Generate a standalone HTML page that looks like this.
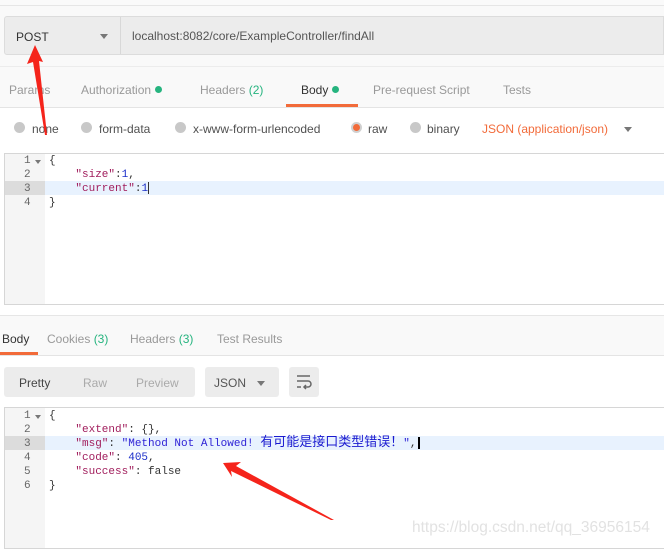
<!DOCTYPE html>
<html><head><meta charset="utf-8"><style>
*{margin:0;padding:0;box-sizing:border-box}
body{width:664px;height:547px;overflow:hidden;background:#fff;font-family:"Liberation Sans","Noto Sans CJK SC",sans-serif;position:relative;color:#505050}
.a{position:absolute;white-space:nowrap}
.mono{font-family:"Liberation Mono","Noto Sans CJK SC",monospace;font-size:11px}
.g{color:#999}
.grn{color:#26b47f}
.dot{display:inline-block;width:7px;height:7px;border-radius:50%;background:#26b47f;margin-left:4px;vertical-align:1px}
.rad{position:absolute;width:11px;height:11px;border-radius:50%;background:#c8c8c8}
.s{color:#a11d5c}.n{color:#1c2fc9}.str{color:#2f23d6}
.ln{position:absolute;left:49px;height:14px;line-height:14px;color:#333}
</style></head><body>
<div class="a" style="left:0;top:0;width:664px;height:6px;border-bottom:1px solid #e6e6e6;background:#fafafa"></div>
<div class="a" style="left:0;top:6px;width:664px;height:102px;background:#f9f9f9"></div>
<div class="a" style="left:4px;top:16px;width:660px;height:39px;background:#ececec;border:1px solid #dcdcdc;border-radius:3px 0 0 3px"></div>
<div class="a" style="left:120px;top:17px;width:1px;height:37px;background:#d8d8d8"></div>
<div class="a" style="left:16px;top:30px;font-size:12px;color:#333">POST</div>
<div class="a" style="left:100px;top:34px;width:0;height:0;border-left:4px solid transparent;border-right:4px solid transparent;border-top:5px solid #777"></div>
<div class="a" style="left:132px;top:29px;font-size:12px;color:#555">localhost:8082/core/ExampleController/findAll</div>
<div class="a" style="left:0;top:66px;width:664px;height:1px;background:#ececec"></div>
<div class="a g" style="left:9px;top:83px;font-size:12px">Params</div>
<div class="a g" style="left:81px;top:83px;font-size:12px">Authorization<span class="dot"></span></div>
<div class="a g" style="left:200px;top:83px;font-size:12px">Headers <span class="grn">(2)</span></div>
<div class="a" style="left:301px;top:83px;font-size:12px;color:#333">Body<span class="dot"></span></div>
<div class="a g" style="left:373px;top:83px;font-size:12px">Pre-request Script</div>
<div class="a g" style="left:503px;top:83px;font-size:12px">Tests</div>
<div class="a" style="left:286px;top:104px;width:72px;height:3px;background:#f26b3a"></div>
<div class="a" style="left:0;top:107px;width:664px;height:1px;background:#e4e4e4"></div>
<div class="rad" style="left:14px;top:122px"></div><div class="a" style="left:32px;top:122px;font-size:12px">none</div>
<div class="rad" style="left:81px;top:122px"></div><div class="a" style="left:99px;top:122px;font-size:12px">form-data</div>
<div class="rad" style="left:175px;top:122px"></div><div class="a" style="left:193px;top:122px;font-size:12px">x-www-form-urlencoded</div>
<div class="rad" style="left:351px;top:122px;background:#f26b3a;border:2px solid #d0d0d0"></div><div class="a" style="left:368px;top:122px;font-size:12px">raw</div>
<div class="rad" style="left:410px;top:122px"></div><div class="a" style="left:427px;top:122px;font-size:12px">binary</div>
<div class="a" style="left:482px;top:122px;font-size:12px;color:#f26b3a">JSON (application/json)</div>
<div class="a" style="left:624px;top:127px;border-left:4px solid transparent;border-right:4px solid transparent;border-top:5px solid #777"></div>
<!-- editor 1 -->
<div class="a" style="left:4px;top:153px;width:662px;height:152px;border:1px solid #d6d6d6;background:#fff"></div>
<div class="a" style="left:5px;top:154px;width:40px;height:150px;background:#f5f5f5"></div>
<div class="a" style="left:45px;top:181px;width:619px;height:14px;background:#e8f2fe"></div>
<div class="a" style="left:5px;top:181px;width:40px;height:14px;background:#dcdcdc"></div>
<div class="a mono" style="left:24px;top:154px;line-height:14px;color:#666">1<br>2<br>3<br>4</div>
<div class="a" style="left:35px;top:160px;border-left:3px solid transparent;border-right:3px solid transparent;border-top:4px solid #777"></div>
<div class="a mono" style="left:49px;top:154px;line-height:14px;color:#333">{<br>&nbsp;&nbsp;&nbsp;&nbsp;<span class="s">"size"</span>:<span class="n">1</span>,<br>&nbsp;&nbsp;&nbsp;&nbsp;<span class="s">"current"</span>:<span class="n">1</span><br>}</div>
<div class="a" style="left:148px;top:182px;width:1px;height:12px;background:#333"></div>
<!-- response -->
<div class="a" style="left:0;top:315px;width:664px;height:41px;background:#f9f9f9;border-top:1px solid #e6e6e6"></div>
<div class="a" style="left:2px;top:332px;font-size:12px;color:#333">Body</div>
<div class="a g" style="left:47px;top:332px;font-size:12px">Cookies <span class="grn">(3)</span></div>
<div class="a g" style="left:130px;top:332px;font-size:12px">Headers <span class="grn">(3)</span></div>
<div class="a g" style="left:217px;top:332px;font-size:12px">Test Results</div>
<div class="a" style="left:0;top:352px;width:38px;height:3px;background:#f26b3a"></div>
<div class="a" style="left:0;top:355px;width:664px;height:1px;background:#e4e4e4"></div>
<div class="a" style="left:4px;top:367px;width:191px;height:30px;background:#ececec;border-radius:3px"></div>
<div class="a" style="left:19px;top:376px;font-size:12px;color:#444">Pretty</div>
<div class="a g" style="left:83px;top:376px;font-size:12px;color:#aaa">Raw</div>
<div class="a g" style="left:136px;top:376px;font-size:12px;color:#aaa">Preview</div>
<div class="a" style="left:205px;top:367px;width:74px;height:30px;background:#ececec;border-radius:3px"></div>
<div class="a" style="left:214px;top:376px;font-size:12px;color:#555">JSON</div>
<div class="a" style="left:257px;top:381px;border-left:4px solid transparent;border-right:4px solid transparent;border-top:5px solid #777"></div>
<div class="a" style="left:289px;top:367px;width:30px;height:30px;background:#ececec;border-radius:3px"></div>
<svg class="a" style="left:289px;top:367px" width="30" height="30"><path d="M8 9h13M8 14h11a3 3 0 0 1 0 6h-4M17 18l-2 2 2 2M8 20h4" fill="none" stroke="#666" stroke-width="1.5"/></svg>
<div class="a" style="left:4px;top:407px;width:662px;height:142px;border:1px solid #d6d6d6;background:#fff"></div>
<div class="a" style="left:5px;top:408px;width:40px;height:140px;background:#f5f5f5"></div>
<div class="a" style="left:45px;top:436px;width:619px;height:14px;background:#e8f2fe"></div>
<div class="a" style="left:5px;top:436px;width:40px;height:14px;background:#dcdcdc"></div>
<div class="a mono" style="left:24px;top:409px;line-height:14px;color:#666">1<br>2<br>3<br>4<br>5<br>6</div>
<div class="a" style="left:35px;top:415px;border-left:3px solid transparent;border-right:3px solid transparent;border-top:4px solid #777"></div>
<div class="a mono ln" style="top:409px">{</div>
<div class="a mono ln" style="top:423px">&nbsp;&nbsp;&nbsp;&nbsp;<span class="s">"extend"</span>: {},</div>
<div class="a mono ln" style="top:437px;font-family:'Liberation Mono',monospace">&nbsp;&nbsp;&nbsp;&nbsp;<span class="s">"msg"</span>: <span class="str">"Method Not Allowed! <span style="font-family:'Noto Sans CJK SC',sans-serif;font-size:13px;line-height:0;color:#1a1ad0">有可能是接口类型错误！</span>"</span>,</div>
<div class="a mono ln" style="top:451px">&nbsp;&nbsp;&nbsp;&nbsp;<span class="s">"code"</span>: <span class="n">405</span>,</div>
<div class="a mono ln" style="top:465px">&nbsp;&nbsp;&nbsp;&nbsp;<span class="s">"success"</span>: false</div>
<div class="a mono ln" style="top:479px">}</div>
<div class="a" style="left:418px;top:437px;width:2px;height:12px;background:#000"></div>
<div class="a" style="left:412px;top:519px;font-size:15.5px;color:#e2e2e2">https://blog.csdn.net/qq_36956154</div>
<svg class="a" style="left:0;top:0" width="664" height="547">
<polygon points="35,45 43,62 39,61 47,135 45,135 33,62 27,64" fill="#f5241b"/>
<polygon points="223,463 241,462 236,466 334,520 331,520 231,471 232,477" fill="#f5241b"/>
</svg>
</body></html>
